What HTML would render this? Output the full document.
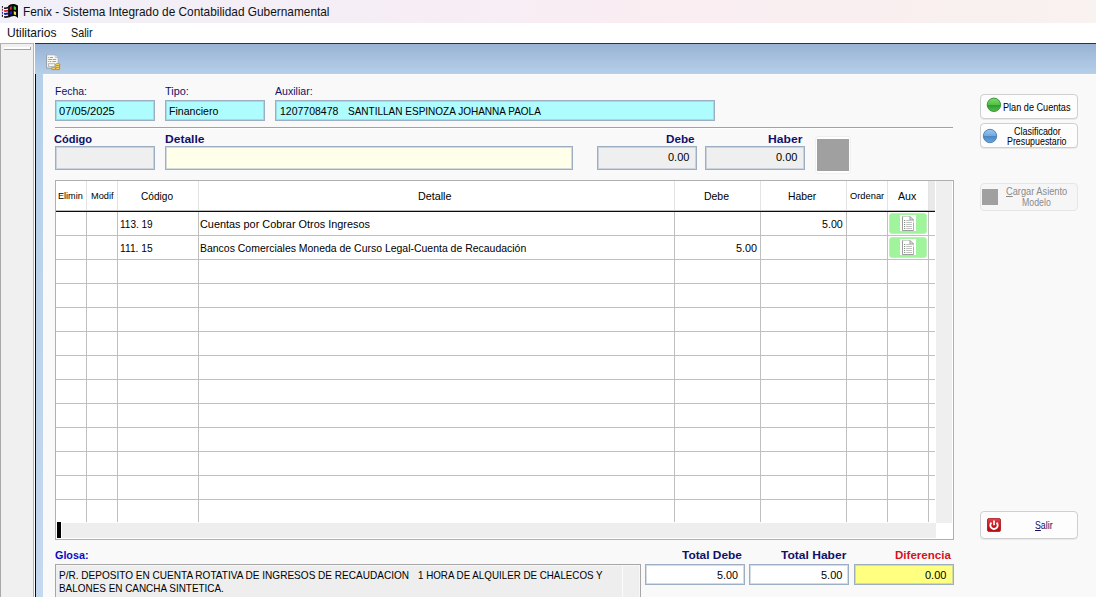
<!DOCTYPE html>
<html lang="es">
<head>
<meta charset="utf-8">
<title>Fenix - Sistema Integrado de Contabilidad Gubernamental</title>
<style>
*{box-sizing:border-box;margin:0;padding:0}
html,body{width:1096px;height:597px;overflow:hidden;background:#f9f9f9}
body{position:relative;font-family:"Liberation Sans",sans-serif;font-size:11px;color:#000}
.a{position:absolute}
.t{position:absolute;white-space:nowrap;line-height:14px;height:14px}
.b{font-weight:bold}
.navy{color:#10106a}
.in{position:absolute;border:1px solid #9dadc2;box-shadow:inset 0 0 0 1px rgba(150,170,198,.42);height:22px}
.cy{background:#aefcfd}
.gr{background:#efefef}
.btn{position:absolute;background:#fdfdfd;border:1px solid #cfcfcf;border-radius:4px;box-shadow:0 1px 0 #e9e9e9}
.vl{position:absolute;width:1px;background:#c0c0c0;top:181px;height:341px}
.hl{position:absolute;height:1px;background:#c0c0c0;left:56px;width:879px}
</style>
</head>
<body>
<!-- title bar -->
<div class="a" style="left:0;top:0;width:1096px;height:23px;background:linear-gradient(90deg,#f1f0f8 0%,#f5eef6 30%,#f9edf3 55%,#f9efef 82%,#f8f2f0 100%)"></div>
<!-- menu bar -->
<div class="a" style="left:0;top:23px;width:1096px;height:20px;background:#fff"></div>
<!-- app icon -->
<svg class="a" style="left:0;top:0" width="20" height="20" viewBox="0 0 20 20">
 <rect x="1.9" y="6.1" width="1.1" height="1.6" fill="#111"/><rect x="1.9" y="8.8" width="1.1" height="1.9" fill="#8a2a2a"/>
 <rect x="1.9" y="11.8" width="1.1" height="2" fill="#2a2ab0"/><rect x="1.9" y="14.7" width="1.1" height="2.1" fill="#111"/>
 <path d="M4 7.2 C5.5 8 6.5 7 8.2 6.8 V8.4 C6.5 8.6 5.5 9.4 4 8.7 Z" fill="#111"/>
 <path d="M4 10 C5.5 10.8 6.5 9.9 8.2 9.7 V11.4 C6.5 11.6 5.5 12.3 4 11.6 Z" fill="#d8181c"/>
 <path d="M4 12.7 C5.5 13.5 6.5 12.7 8.2 12.5 V14.4 C6.5 14.6 5.5 15.3 4 14.6 Z" fill="#1a1aa8"/>
 <path d="M4 16 C5.5 16.7 6.5 16 8.2 15.8 V17.5 C6.5 17.7 5.5 18.2 4 17.6 Z" fill="#111"/>
 <path d="M8.1 6 C9.5 4.6 11 3.8 13 3.9 C15 3.9 16.6 4.5 18 5.4 V17.9 C17 17.1 16 16.4 15 16.1 C13.6 15.8 12.4 16 11.2 16.6 C10 17.2 9 17.6 8.1 17.6 Z" fill="#0a0a0a"/>
 <path d="M9.9 7 C10.5 6.5 11.2 6.3 11.8 6.3 V9.4 C11.2 9.4 10.5 9.6 9.9 9.9 Z" fill="#e3262c"/>
 <path d="M13.8 6.3 C14.6 6.4 15.3 6.7 16 7.3 V10 C15.3 9.6 14.6 9.4 13.8 9.4 Z" fill="#35c845"/>
 <path d="M9.8 11.7 C10.5 11.4 11.2 11.2 12 11.3 V14.4 C11.2 14.4 10.5 14.5 9.8 14.8 Z" fill="#1818d8"/>
 <path d="M13.8 11.2 C14.6 11.3 15.3 11.6 16 12.1 V15 C15.3 14.6 14.6 14.4 13.8 14.4 Z" fill="#f2e83a"/>
</svg>
<span class="t" id="title" style="left:23.0px;top:4px;font-size:12.4px;line-height:16px;height:16px;color:#111;transform:scaleX(0.957);transform-origin:0 0">Fenix - Sistema Integrado de Contabilidad Gubernamental</span>
<span class="t" id="m1" style="left:6.8px;top:25px;font-size:12.2px;line-height:16px;height:16px;color:#111;transform:scaleX(0.986);transform-origin:0 0">Utilitarios</span>
<span class="t" id="m2" style="left:70.8px;top:25px;font-size:12.2px;line-height:16px;height:16px;color:#111;transform:scaleX(0.881);transform-origin:0 0">Salir</span>

<!-- left sidebar -->
<div class="a" style="left:0;top:43px;width:35px;height:554px;background:#f0f0f0;border-left:1px solid #a9a9a9;border-right:1px solid #fff"></div>
<div class="a" style="left:33px;top:43px;width:1px;height:554px;background:#b4b4b4"></div>
<div class="a" style="left:0;top:43px;width:34px;height:1px;background:#b4b4b4"></div>
<div class="a" style="left:4px;top:47px;width:27px;height:3px;background:#fdfdfd;border-bottom:1px solid #a3a3a3;border-right:1px solid #a3a3a3"></div>

<!-- blue header -->
<div class="a" style="left:35px;top:43px;width:1061px;height:31px;background:linear-gradient(180deg,#98b3d3 0%,#a7c1df 50%,#b6d0ea 100%);border-top:1px solid #2b3340"></div>
<!-- blue left strip -->
<div class="a" style="left:35px;top:74px;width:8px;height:523px;background:linear-gradient(180deg,#b7d0ea,#c4d8ee);border-left:1px solid #0a0a0a"></div>
<!-- content -->
<div class="a" style="left:43px;top:74px;width:1053px;height:523px;background:#f9f9f9;border-top:1px solid #fcfcfc"></div>

<!-- toolbar icon -->
<svg class="a" style="left:46px;top:54px" width="15" height="17" viewBox="0 0 15 17">
 <path d="M0.6 0.9 H9.2 L12 3.6 V14.2 H0.6 Z" fill="#fafaf3" stroke="#aab2ba" stroke-width=".8"/>
 <path d="M0.6 0.9 V14.2 H8" fill="none" stroke="#8f98a2" stroke-width=".8"/>
 <path d="M9.2 0.9 V3.6 H12 Z" fill="#fff" stroke="#aab2ba" stroke-width=".7"/>
 <path d="M2.2 3.5 h.9 M3.8 3.5 h3.2 M2.2 5.5 h4.2 M7 5.5 h3.2 M2.2 7.5 h.9 M3.6 7.5 h1.6 M6.4 7.5 h3.8" stroke="#9aa49c" stroke-width="1"/>
 <rect x="2.4" y="9.7" width="6.4" height="2.8" fill="#f2f2ee" stroke="#a9adb0" stroke-width=".8"/>
 <g stroke="#a87a1a" stroke-width=".7">
  <rect x="9.5" y="9.7" width="4.3" height="2" rx=".9" fill="#ecbf3e"/>
  <rect x="9.5" y="11.7" width="4.3" height="2" rx=".9" fill="#ecbf3e"/>
  <rect x="9.5" y="13.6" width="4.3" height="2" rx=".9" fill="#ecbf3e"/>
  <rect x="5.5" y="13.6" width="4.1" height="2" rx=".9" fill="#ecbf3e"/>
 </g>
 <path d="M10.3 10.4 h2.7 M10.3 12.4 h2.7 M10.3 14.3 h2.7 M6.3 14.3 h2.5" stroke="#fae493" stroke-width=".7"/>
</svg>

<!-- row 1 labels -->
<span class="t navy" id="l1" style="left:54.6px;top:84px;transform:scaleX(0.951);transform-origin:0 0">Fecha:</span>
<span class="t navy" id="l2" style="left:165.2px;top:84px;transform:scaleX(0.990);transform-origin:0 0">Tipo:</span>
<span class="t navy" id="l3" style="left:275.2px;top:84px;transform:scaleX(0.961);transform-origin:0 0">Auxiliar:</span>
<div class="in cy" style="left:55px;top:100px;width:100px;height:21px"></div>
<div class="in cy" style="left:165px;top:100px;width:100px;height:21px"></div>
<div class="in cy" style="left:275px;top:100px;width:440px;height:21px"></div>
<span class="t" id="v1" style="left:59.1px;top:104px;transform:scaleX(1.013);transform-origin:0 0">07/05/2025</span>
<span class="t" id="v2" style="left:168.6px;top:104px;transform:scaleX(0.960);transform-origin:0 0">Financiero</span>
<span class="t" id="v3" style="left:280.2px;top:104px;transform:scaleX(0.954);transform-origin:0 0">1207708478</span>
<span class="t" id="v3b" style="left:348.3px;top:104px;transform:scaleX(0.910);transform-origin:0 0">SANTILLAN ESPINOZA JOHANNA PAOLA</span>

<!-- rule -->
<div class="a" style="left:55px;top:127px;width:898px;height:2px;background:#a2a2a2;border-bottom:1px solid #fff"></div>

<!-- row 2 -->
<span class="t b navy" id="l4" style="left:54.4px;top:132px;transform:scaleX(1.003);transform-origin:0 0">Código</span>
<span class="t b navy" id="l5" style="left:164.6px;top:132px;transform:scaleX(1.095);transform-origin:0 0">Detalle</span>
<span class="t b navy" id="l6" style="left:665.8px;top:132px;transform:scaleX(1.063);transform-origin:0 0">Debe</span>
<span class="t b navy" id="l7" style="left:768.4px;top:132px;transform:scaleX(1.103);transform-origin:0 0">Haber</span>
<div class="in gr" style="left:55px;top:146px;width:100px;height:24px"></div>
<div class="in" style="left:165px;top:146px;width:408px;height:24px;background:#ffffea"></div>
<div class="in gr" style="left:597px;top:146px;width:100px;height:24px"></div>
<div class="in gr" style="left:705px;top:146px;width:100px;height:24px"></div>
<span class="t" id="v4" style="left:668.0px;top:150px;transform:scaleX(0.999);transform-origin:0 0">0.00</span>
<span class="t" id="v5" style="left:776.0px;top:150px;transform:scaleX(0.999);transform-origin:0 0">0.00</span>
<div class="a" style="left:815px;top:136px;width:36px;height:38px;background:#fefefe;border:1px solid #f0f0f0;border-radius:3px"></div>
<div class="a" style="left:817px;top:139px;width:32px;height:32px;background:#a0a0a0"></div>

<!-- right buttons -->
<div class="btn" style="left:980px;top:94px;width:98px;height:25px"></div>
<svg class="a" style="left:986px;top:97px" width="16" height="16" viewBox="0 0 16 16">
 <defs><linearGradient id="gg" x1="0" y1="0" x2="0" y2="1"><stop offset="0" stop-color="#7ddc6c"/><stop offset=".5" stop-color="#52c046"/><stop offset=".52" stop-color="#2f9a2c"/><stop offset="1" stop-color="#55c04c"/></linearGradient></defs>
 <circle cx="7.9" cy="7.8" r="6.7" fill="url(#gg)" stroke="#2f8a2c" stroke-width=".9"/>
</svg>
<span class="t" id="b1" style="left:1003.1px;top:100.5px;font-size:10px;transform:scaleX(0.913);transform-origin:0 0">Plan de Cuentas</span>
<div class="btn" style="left:980px;top:123px;width:98px;height:25px"></div>
<svg class="a" style="left:982px;top:128px" width="16" height="16" viewBox="0 0 16 16">
 <defs><linearGradient id="bg" x1="0" y1="0" x2="0" y2="1"><stop offset="0" stop-color="#9cc8f0"/><stop offset=".5" stop-color="#6fa8de"/><stop offset=".52" stop-color="#4a86c4"/><stop offset="1" stop-color="#6ea6dc"/></linearGradient></defs>
 <circle cx="8" cy="8" r="6.7" fill="url(#bg)" stroke="#4a7cb4" stroke-width=".9"/>
</svg>
<span class="t" id="b2" style="left:1013.8px;top:125.6px;font-size:10px;line-height:11px;transform:scaleX(0.896);transform-origin:0 0">Clasificador</span>
<span class="t" id="b3" style="left:1007.0px;top:135.9px;font-size:10px;line-height:11px;transform:scaleX(0.885);transform-origin:0 0">Presupuestario</span>
<div class="btn" style="left:980px;top:183px;width:98px;height:28px;background:#f6f6f6;border-color:#e6e6e6;box-shadow:none"></div>
<div class="a" style="left:982px;top:189px;width:16px;height:16px;background:#a0a0a0"></div>
<span class="t" id="b4" style="left:1006.0px;top:186.3px;font-size:10px;line-height:11px;color:#8a8a8a;transform:scaleX(0.925);transform-origin:0 0"><u>C</u>argar Asiento</span>
<span class="t" id="b5" style="left:1022.4px;top:196.5px;font-size:10px;line-height:11px;color:#8a8a8a;transform:scaleX(0.878);transform-origin:0 0">Modelo</span>
<div class="btn" style="left:980px;top:511px;width:98px;height:28px"></div>
<svg class="a" style="left:987px;top:518px" width="14" height="14" viewBox="0 0 14 14">
 <defs><linearGradient id="rg" x1="0" y1="0" x2="0" y2="1"><stop offset="0" stop-color="#de4a50"/><stop offset=".5" stop-color="#c8161e"/><stop offset="1" stop-color="#b40e16"/></linearGradient></defs>
 <rect x=".4" y=".4" width="13.2" height="13.2" rx="1.8" fill="url(#rg)" stroke="#a20c14" stroke-width=".8"/>
 <path d="M4.4 4.6 A3.7 3.7 0 1 0 9.6 4.6" fill="none" stroke="#fff" stroke-width="1.9"/>
 <path d="M7 2.4 V7.2" stroke="#fff" stroke-width="1.7"/>
</svg>
<span class="t navy" id="b6" style="left:1034.6px;top:519px;font-size:10px;transform:scaleX(0.879);transform-origin:0 0"><u>S</u>alir</span>

<!-- grid -->
<div class="a" style="left:55px;top:180px;width:899px;height:360px;background:#fff;border:1px solid #b0b0b0"></div>
<!-- header extra gray cell -->
<div class="a" style="left:929px;top:181px;width:6px;height:30px;background:#e9e9e9"></div>
<!-- v scroll -->
<div class="a" style="left:935px;top:181px;width:18px;height:358px;background:#fff"></div><div class="a" style="left:936px;top:181px;width:16px;height:342px;background:#efefef"></div>
<!-- h scroll -->
<div class="a" style="left:56px;top:522px;width:880px;height:17px;background:#fff"></div><div class="a" style="left:62px;top:523px;width:874px;height:15px;background:#eeeeee"></div>
<div class="a" style="left:57px;top:522px;width:4px;height:16px;background:#000"></div>
<!-- grid lines -->
<div class="vl" style="left:86px"></div><div class="vl" style="left:117px"></div><div class="vl" style="left:198px"></div>
<div class="vl" style="left:674px"></div><div class="vl" style="left:760px"></div><div class="vl" style="left:846px"></div>
<div class="vl" style="left:887px"></div><div class="vl" style="left:928px"></div>
<div class="hl" style="top:211px;background:#0c0c0c"></div><div class="hl" style="top:210px;background:#bdbdbd"></div>
<div class="hl" style="top:235px"></div><div class="hl" style="top:259px"></div><div class="hl" style="top:283px"></div>
<div class="hl" style="top:307px"></div><div class="hl" style="top:331px"></div><div class="hl" style="top:355px"></div>
<div class="hl" style="top:379px"></div><div class="hl" style="top:403px"></div><div class="hl" style="top:427px"></div>
<div class="hl" style="top:451px"></div><div class="hl" style="top:475px"></div><div class="hl" style="top:499px"></div>
<!-- header sep overlay -->
<div class="a" style="left:86px;top:181px;width:1px;height:29px;background:#e3e3e3"></div><div class="a" style="left:117px;top:181px;width:1px;height:29px;background:#e3e3e3"></div>
<div class="a" style="left:198px;top:181px;width:1px;height:29px;background:#e3e3e3"></div><div class="a" style="left:674px;top:181px;width:1px;height:29px;background:#e3e3e3"></div>
<div class="a" style="left:760px;top:181px;width:1px;height:29px;background:#e3e3e3"></div><div class="a" style="left:846px;top:181px;width:1px;height:29px;background:#e3e3e3"></div>
<div class="a" style="left:887px;top:181px;width:1px;height:29px;background:#e3e3e3"></div><div class="a" style="left:928px;top:181px;width:1px;height:29px;background:#e3e3e3"></div>
<!-- header text -->
<span class="t" id="h1" style="left:58.4px;top:189px;font-size:9px;transform:scaleX(1.012);transform-origin:0 0">Elimin</span>
<span class="t" id="h2" style="left:91.2px;top:189px;font-size:9px;transform:scaleX(1.022);transform-origin:0 0">Modif</span>
<span class="t" id="h3" style="left:141.4px;top:189px;transform:scaleX(0.918);transform-origin:0 0">Código</span>
<span class="t" id="h4" style="left:418.4px;top:189px;transform:scaleX(0.978);transform-origin:0 0">Detalle</span>
<span class="t" id="h5" style="left:703.7px;top:189px;transform:scaleX(0.951);transform-origin:0 0">Debe</span>
<span class="t" id="h6" style="left:788.1px;top:189px;transform:scaleX(0.941);transform-origin:0 0">Haber</span>
<span class="t" id="h7" style="left:849.7px;top:189px;font-size:9px;transform:scaleX(1.035);transform-origin:0 0">Ordenar</span>
<span class="t" id="h8" style="left:898.4px;top:189px;transform:scaleX(0.965);transform-origin:0 0">Aux</span>
<!-- rows -->
<span class="t" id="r1a" style="left:120.1px;top:217px;transform:scaleX(0.912);transform-origin:0 0">113.<span style="margin-left:3px">19</span></span>
<span class="t" id="r1b" style="left:200.0px;top:217px;transform:scaleX(0.989);transform-origin:0 0">Cuentas por Cobrar Otros Ingresos</span>
<span class="t" id="r1c" style="left:822.0px;top:217px;transform:scaleX(0.971);transform-origin:0 0">5.00</span>
<span class="t" id="r2a" style="left:120.1px;top:241px;transform:scaleX(0.933);transform-origin:0 0">111.<span style="margin-left:3px">15</span></span>
<span class="t" id="r2b" style="left:200.0px;top:241px;transform:scaleX(0.951);transform-origin:0 0">Bancos Comerciales Moneda de Curso Legal-Cuenta de Recaudación</span>
<span class="t" id="r2c" style="left:735.5px;top:241px;transform:scaleX(0.985);transform-origin:0 0">5.00</span>
<!-- aux buttons -->
<div class="a" style="left:889px;top:213px;width:38px;height:21px;background:#a0f59c;border:1px solid #b8f2b4;border-radius:3px"></div>
<div class="a" style="left:889px;top:237px;width:38px;height:21px;background:#a0f59c;border:1px solid #b8f2b4;border-radius:3px"></div>
<svg class="a" style="left:900px;top:215px" width="16" height="16" viewBox="0 0 16 16">
 <rect x="0" y="-0.5" width="16" height="16.5" fill="#fefefe"/>
 <path d="M2.5 1.5 H10 L13.5 5 V15.5 H2.5 Z" fill="#fff" stroke="#d4d4d4"/>
 <path d="M2.5 1.5 V15.5 H13.5" fill="none" stroke="#9c9c9c"/>
 <path d="M13.5 15.5 V8" fill="none" stroke="#b0b0b0"/>
 <path d="M10 1.5 V5 H13.5 Z" fill="#f4f4f4" stroke="#9a9a9a"/>
 <path d="M4 5.5 h1.2 M4 7.5 h1.2 M4 9.5 h1.2 M4 11.5 h1.2 M4 13.5 h1.2" stroke="#7f8f7f" stroke-width="1"/>
 <path d="M6.2 5.5 h5.8 M6.2 7.5 h5.8 M6.2 9.5 h5.8 M6.2 11.5 h5.8 M6.2 13.5 h5.8" stroke="#c2c2c2" stroke-width="1"/>
</svg>
<svg class="a" style="left:900px;top:239px" width="16" height="16" viewBox="0 0 16 16">
 <rect x="0" y="-0.5" width="16" height="16.5" fill="#fefefe"/>
 <path d="M2.5 1.5 H10 L13.5 5 V15.5 H2.5 Z" fill="#fff" stroke="#d4d4d4"/>
 <path d="M2.5 1.5 V15.5 H13.5" fill="none" stroke="#9c9c9c"/>
 <path d="M13.5 15.5 V8" fill="none" stroke="#b0b0b0"/>
 <path d="M10 1.5 V5 H13.5 Z" fill="#f4f4f4" stroke="#9a9a9a"/>
 <path d="M4 5.5 h1.2 M4 7.5 h1.2 M4 9.5 h1.2 M4 11.5 h1.2 M4 13.5 h1.2" stroke="#7f8f7f" stroke-width="1"/>
 <path d="M6.2 5.5 h5.8 M6.2 7.5 h5.8 M6.2 9.5 h5.8 M6.2 11.5 h5.8 M6.2 13.5 h5.8" stroke="#c2c2c2" stroke-width="1"/>
</svg>

<!-- bottom -->
<span class="t b" id="g0" style="left:54.9px;top:548px;color:#0a0ac8;transform:scaleX(0.979);transform-origin:0 0">Glosa:</span>
<div class="a" style="left:55px;top:564px;width:586px;height:40px;background:#eeeeee;border:1px solid #a6a6a6;box-shadow:inset 0 1px 0 #f8f8f8,inset -1px 0 0 #f8f8f8"></div>
<div class="a" style="left:622px;top:566px;width:17px;height:31px;background:#efefef;border-left:1px solid #fbfbfb"></div>
<span class="t" id="g1" style="left:58.9px;top:568px;transform:scaleX(0.913);transform-origin:0 0">P/R. DEPOSITO EN CUENTA ROTATIVA DE INGRESOS DE RECAUDACION</span>
<span class="t" id="g1b" style="left:418.4px;top:568px;transform:scaleX(0.889);transform-origin:0 0">1 HORA DE ALQUILER DE CHALECOS Y</span>
<span class="t" id="g2" style="left:58.9px;top:581px;transform:scaleX(0.902);transform-origin:0 0">BALONES EN CANCHA SINTETICA.</span>
<span class="t b navy" id="t1" style="left:682.2px;top:548px;transform:scaleX(1.081);transform-origin:0 0">Total Debe</span>
<span class="t b navy" id="t2" style="left:781.0px;top:548px;transform:scaleX(1.095);transform-origin:0 0">Total Haber</span>
<span class="t b" id="t3" style="left:894.6px;top:548px;color:#d8101a;transform:scaleX(1.049);transform-origin:0 0">Diferencia</span>
<div class="in" style="left:645px;top:564px;width:100px;height:21px;background:#fff"></div>
<div class="in" style="left:749px;top:564px;width:100px;height:21px;background:#fff"></div>
<div class="in" style="left:854px;top:564px;width:100px;height:21px;background:#ffff80"></div>
<span class="t" id="v6" style="left:716.6px;top:568px;transform:scaleX(0.980);transform-origin:0 0">5.00</span>
<span class="t" id="v7" style="left:820.6px;top:568px;transform:scaleX(0.999);transform-origin:0 0">5.00</span>
<span class="t" id="v8" style="left:925.2px;top:568px;transform:scaleX(0.999);transform-origin:0 0">0.00</span>
</body>
</html>
